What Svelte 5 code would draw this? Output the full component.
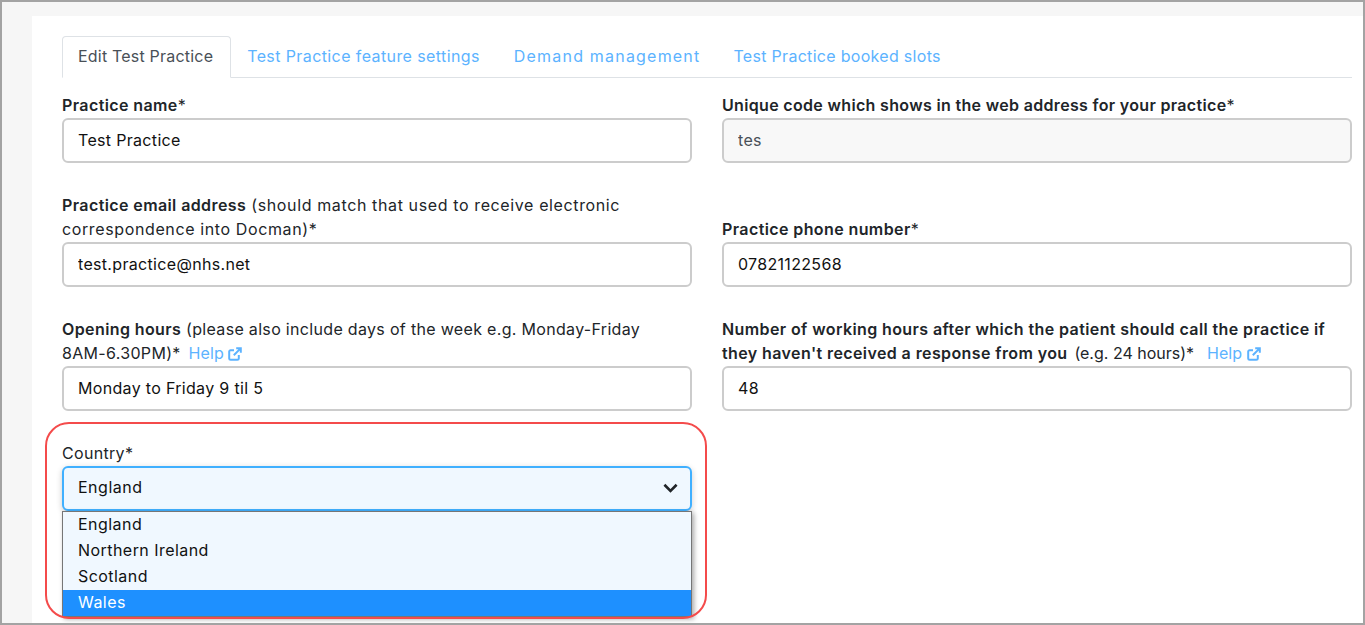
<script>
	const tabs = ['Edit Test Practice', 'Test Practice feature settings', 'Demand management', 'Test Practice booked slots'];
	const countries = ['England', 'Northern Ireland', 'Scotland', 'Wales'];
	let country = $state('England');
	let hovered = $state('Wales');
</script>

<div class="frame">
	<div class="card">
		<ul class="tabs">
			{#each tabs as tab, i}
				<li class:active={i === 0}>{tab}</li>
			{/each}
		</ul>

		<form class="grid">
			<div class="field">
				<label for="name"><strong>Practice name</strong>*</label>
				<input id="name" type="text" value="Test Practice" />
			</div>
			<div class="field">
				<label for="code" class="snug"><strong>Unique code which shows in the web address for your practice</strong>*</label>
				<input id="code" type="text" value="tes" readonly class="readonly" />
			</div>

			<div class="field">
				<label for="email" class="wide"><strong>Practice email address</strong> (should match that used to receive electronic correspondence into Docman)*</label>
				<input id="email" type="text" value="test.practice@nhs.net" />
			</div>
			<div class="field">
				<label for="phone"><strong>Practice phone number</strong>*</label>
				<input id="phone" type="text" value="07821122568" />
			</div>

			<div class="field">
				<label for="hours"><strong>Opening hours</strong> (please also include days of the week e.g. Monday-Friday <span class="nowrap">8AM-6.30PM)*</span>
					<span class="help">Help
						<svg viewBox="0 0 14 14" width="14" height="14" fill="none" stroke="currentColor" stroke-width="2">
							<path d="M10.8 8v3.4a1.4 1.4 0 0 1-1.4 1.4H2.6a1.4 1.4 0 0 1-1.4-1.4V4.6a1.4 1.4 0 0 1 1.4-1.4H6" />
							<path d="M8.2 1.2h4.6v4.6M12.6 1.4 5.8 8.2" />
						</svg>
					</span>
				</label>
				<input id="hours" type="text" value="Monday to Friday 9 til 5" />
			</div>
			<div class="field">
				<label for="work"><strong>Number of working hours after which the patient should call the practice if they haven't received a response from you</strong> <span class="tight">(e.g. 24 hours)*</span>
					<span class="help">Help
						<svg viewBox="0 0 14 14" width="14" height="14" fill="none" stroke="currentColor" stroke-width="2">
							<path d="M10.8 8v3.4a1.4 1.4 0 0 1-1.4 1.4H2.6a1.4 1.4 0 0 1-1.4-1.4V4.6a1.4 1.4 0 0 1 1.4-1.4H6" />
							<path d="M8.2 1.2h4.6v4.6M12.6 1.4 5.8 8.2" />
						</svg>
					</span>
				</label>
				<input id="work" type="text" value="48" />
			</div>

			<div class="field country">
				<label for="country">Country*</label>
				<div class="select-wrap">
					<select id="country" bind:value={country}>
						{#each countries as c}
							<option value={c}>{c}</option>
						{/each}
					</select>
					<svg class="chevron" viewBox="0 0 16 10" width="15" height="10" fill="none" stroke="#212529" stroke-width="2.8">
						<path d="M1.5 1.5 8 8l6.5-6.5" />
					</svg>
					<ul class="options">
						{#each countries as c}
							<li class:selected={hovered === c} onmouseenter={() => (hovered = c)}>{c}</li>
						{/each}
					</ul>
				</div>
				<div class="annotation"></div>
			</div>
		</form>
	</div>
</div>

<style>
	:global(body) {
		margin: 0;
		overflow: hidden;
	}

	.frame {
		box-sizing: border-box;
		height: 625px;
		border: 2px solid #a3a3a3;
		background: #f6f6f6;
		padding: 14px 0 0 30px;
		overflow: hidden;
		font-family: Inter, "Open Sans", sans-serif;
		font-size: 16px;
		line-height: 24px;
		letter-spacing: 0.32px;
		color: #212529;
	}

	.card {
		background: #fff;
		height: 100%;
		box-sizing: border-box;
		padding: 20px 11px 0 30px;
	}

	.tabs {
		display: flex;
		list-style: none;
		margin: 0 0 15px;
		padding: 0;
		height: 42px;
		box-sizing: border-box;
		border-bottom: 1px solid #dee2e6;
	}

	.tabs li {
		box-sizing: border-box;
		height: 42px;
		padding: 7px 16px;
		border: 1px solid transparent;
		border-radius: 4px 4px 0 0;
		color: #5cb3ff;
		letter-spacing: 0.4px;
	}

	.tabs li:nth-child(2) {
		margin-left: -1px;
	}

	.tabs li:nth-child(3) {
		padding-right: 15px;
		letter-spacing: 1.2px;
	}

	.tabs li:nth-child(4) {
		letter-spacing: 0.3px;
	}

	.tabs li.active {
		padding: 7px 17px 7px 15px;
		color: #495057;
		background: #fff;
		border-color: #dee2e6 #dee2e6 #fff;
		letter-spacing: 0.2px;
	}

	.grid {
		display: grid;
		grid-template-columns: 1fr 1fr;
		column-gap: 30px;
		row-gap: 30px;
		align-items: end;
	}

	.field label {
		display: block;
		margin-bottom: 1px;
	}

	.field label.wide {
		letter-spacing: 0.62px;
	}

	strong {
		font-weight: 600;
		letter-spacing: 0.4px;
	}

	.snug strong {
		letter-spacing: 0.33px;
	}

	.nowrap {
		white-space: nowrap;
	}

	.tight {
		letter-spacing: 0;
		margin-left: 2px;
		padding-right: 5px;
	}

	input,
	select {
		display: block;
		width: 100%;
		height: 45px;
		box-sizing: border-box;
		padding: 0 14px 2px;
		border: 2px solid #ccc;
		border-radius: 6px;
		background: #fff;
		font: inherit;
		letter-spacing: inherit;
		color: #111;
		outline: none;
	}

	input.readonly {
		background: #f8f8f8;
		color: #495057;
	}

	.help {
		color: #5cb3ff;
		margin-left: 3px;
		white-space: nowrap;
		letter-spacing: 0.1px;
	}

	.help svg {
		vertical-align: -2px;
	}

	.country {
		position: relative;
	}

	.select-wrap {
		position: relative;
	}

	select {
		appearance: none;
		padding-bottom: 4px;
		background: aliceblue;
		border-color: #40b0ff;
		box-shadow: 0 2px 6px rgba(0, 0, 0, 0.2);
		letter-spacing: 0.5px;
	}

	.chevron {
		position: absolute;
		right: 14px;
		top: 17px;
		pointer-events: none;
	}

	.options {
		position: absolute;
		left: 0;
		right: 0;
		top: 45px;
		z-index: 2;
		margin: 0;
		padding: 0;
		list-style: none;
		box-sizing: border-box;
		border: 1px solid #767676;
		background: aliceblue;
		box-shadow: 2px 2px 5px rgba(0, 0, 0, 0.35);
		letter-spacing: 0.45px;
	}

	.options li {
		height: 26px;
		line-height: 24px;
		padding-left: 15px;
		color: #111;
	}

	.options li.selected {
		background: #1e90ff;
		color: #fff;
	}

	.annotation {
		position: absolute;
		left: -17px;
		right: -15px;
		top: -19px;
		height: 197px;
		box-sizing: border-box;
		border: 2px solid #f44b4b;
		border-radius: 24px;
		z-index: 3;
		pointer-events: none;
	}
</style>
